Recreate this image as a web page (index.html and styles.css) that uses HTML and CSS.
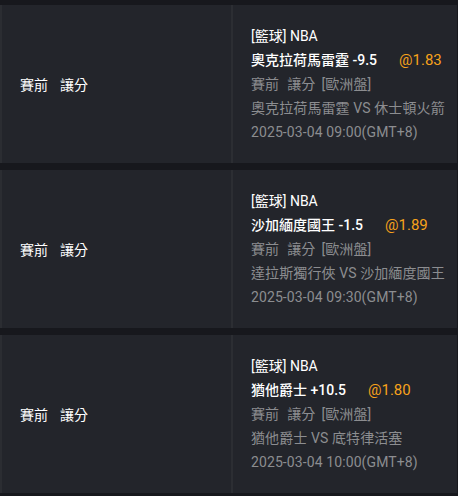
FILE: index.html
```html
<!DOCTYPE html>
<html lang="zh-Hant">
<head>
<meta charset="utf-8">
<link rel="stylesheet" href="styles.css">
</head>
<body>
<div class="list">
  <div class="row">
    <div class="left"><span class="gap">賽前</span><span>讓分</span></div>
    <div class="divider"></div>
    <div class="right">
      <div class="l1">[籃球] NBA</div>
      <div class="l2">奧克拉荷馬雷霆 -9.5<span class="odds">@1.83</span></div>
      <div class="l3"><span class="g1">賽前</span><span class="g2">讓分</span><span>[歐洲盤]</span></div>
      <div class="l3">奧克拉荷馬雷霆 VS 休士頓火箭</div>
      <div class="l3">2025-03-04 09:00(GMT+8)</div>
    </div>
  </div>
  <div class="row">
    <div class="left"><span class="gap">賽前</span><span>讓分</span></div>
    <div class="divider"></div>
    <div class="right">
      <div class="l1">[籃球] NBA</div>
      <div class="l2">沙加緬度國王 -1.5<span class="odds">@1.89</span></div>
      <div class="l3"><span class="g1">賽前</span><span class="g2">讓分</span><span>[歐洲盤]</span></div>
      <div class="l3">達拉斯獨行俠 VS 沙加緬度國王</div>
      <div class="l3">2025-03-04 09:30(GMT+8)</div>
    </div>
  </div>
  <div class="row">
    <div class="left"><span class="gap">賽前</span><span>讓分</span></div>
    <div class="divider"></div>
    <div class="right">
      <div class="l1">[籃球] NBA</div>
      <div class="l2">猶他爵士 +10.5<span class="odds">@1.80</span></div>
      <div class="l3"><span class="g1">賽前</span><span class="g2">讓分</span><span>[歐洲盤]</span></div>
      <div class="l3">猶他爵士 VS 底特律活塞</div>
      <div class="l3">2025-03-04 10:00(GMT+8)</div>
    </div>
  </div>
</div>
</body>
</html>
```

FILE: styles.css
```css
html, body {
  margin: 0;
  padding: 0;
  background: #17181d;
  font-family: Roboto, "Noto Sans CJK TC", sans-serif;
  font-size: 14px;
}
.list {
  padding-top: 5px;
  display: flex;
  flex-direction: column;
  gap: 7px;
}
.row {
  height: 158px;
  display: flex;
  background: #23252b;
  border-left: 2px solid #2b2d32;
  margin-right: 1px;
}
.left {
  width: 211px;
  padding-left: 18px;
  display: flex;
  align-items: center;
  color: #ffffff;
  font-weight: 400;
}
.left .gap {
  margin-right: 12px;
}
.divider {
  width: 2px;
  background: #2c2e33;
}
.right {
  flex: 1;
  padding-left: 18px;
  display: flex;
  flex-direction: column;
  justify-content: center;
  line-height: 24px;
}
.l1 {
  color: #ffffff;
  font-weight: 400;
}
.l2 {
  color: #ffffff;
  font-weight: 500;
}
.odds {
  color: #f7a21b;
  font-weight: 400;
  font-size: 15px;
  margin-left: 22px;
}
.l3 {
  color: #8c8d90;
  white-space: nowrap;
  letter-spacing: 0.1px;
}
.g1 {
  margin-right: 8px;
}
.g2 {
  margin-right: 6px;
}
```
